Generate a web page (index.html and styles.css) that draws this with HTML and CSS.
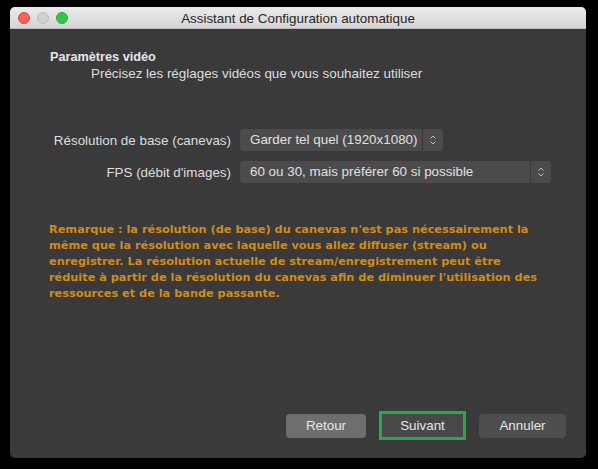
FILE: index.html
```html
<!DOCTYPE html>
<html lang="fr">
<head>
<meta charset="utf-8">
<title>Assistant de Configuration automatique</title>
<link rel="stylesheet" href="styles.css">
</head>
<body>
<div class="window">
  <div class="titlebar">
    <div class="lights">
      <span class="light red"></span>
      <span class="light grey"></span>
      <span class="light green"></span>
    </div>
    <div class="title">Assistant de Configuration automatique</div>
  </div>
  <div class="content">
    <div class="heading">Paramètres vidéo</div>
    <div class="subheading">Précisez les réglages vidéos que vous souhaitez utiliser</div>
    <div class="form">
      <div class="row">
        <div class="label">Résolution de base (canevas)</div>
        <div class="select short">
          <span class="value">Garder tel quel (1920x1080)</span>
          <span class="arrows"><svg width="8" height="12" viewBox="0 0 8 12"><path d="M1.5 4.5 L4 2 L6.5 4.5 M1.5 7.5 L4 10 L6.5 7.5" fill="none" stroke="#bdbdbd" stroke-width="1"/></svg></span>
        </div>
      </div>
      <div class="row">
        <div class="label">FPS (débit d'images)</div>
        <div class="select long">
          <span class="value">60 ou 30, mais préférer 60 si possible</span>
          <span class="arrows"><svg width="8" height="12" viewBox="0 0 8 12"><path d="M1.5 4.5 L4 2 L6.5 4.5 M1.5 7.5 L4 10 L6.5 7.5" fill="none" stroke="#bdbdbd" stroke-width="1"/></svg></span>
        </div>
      </div>
    </div>
    <p class="note">Remarque : la résolution (de base) du canevas n'est pas nécessairement la même que la résolution avec laquelle vous allez diffuser (stream) ou enregistrer. La résolution actuelle de stream/enregistrement peut être réduite à partir de la résolution du canevas afin de diminuer l'utilisation des ressources et de la bande passante.</p>
    <div class="spacer"></div>
    <div class="buttons">
      <button class="btn back">Retour</button>
      <button class="btn next">Suivant</button>
      <button class="btn cancel">Annuler</button>
    </div>
  </div>
</div>
</body>
</html>
```

FILE: styles.css
```css
html, body {
  margin: 0;
  padding: 0;
  background: #000;
  width: 598px;
  height: 469px;
  overflow: hidden;
}
body {
  font-family: "Liberation Sans", Arial, sans-serif;
  font-size: 13.4px;
  color: #dcdcdc;
}
.window {
  margin: 7px 12px 11px 10px;
  width: 576px;
  height: 451px;
  background: #3a3a3a;
  border-radius: 5px;
  overflow: hidden;
  display: flex;
  flex-direction: column;
}
.titlebar {
  height: 21px;
  flex: none;
  background: linear-gradient(#ebebeb, #d5d5d5);
  border-bottom: 1px solid #b8b8b8;
  position: relative;
  display: flex;
  align-items: center;
  justify-content: center;
}
.lights {
  position: absolute;
  left: 8px;
  top: 5px;
  display: flex;
  gap: 7px;
}
.light {
  width: 12px;
  height: 12px;
  border-radius: 50%;
  box-sizing: border-box;
}
.light.red { background: #fc5f57; border: 1px solid #e0443e; }
.light.grey { background: #d0d0d0; border: 1px solid #bdbdbd; }
.light.green { background: #33c748; border: 1px solid #27aa35; }
.title {
  color: #262626;
  font-size: 13.4px;
  padding-top: 1px;
}
.content {
  flex: 1;
  display: flex;
  flex-direction: column;
  padding: 21px 20px 18px 40px;
}
.heading {
  font-weight: bold;
  font-size: 12.7px;
  color: #e6e6e6;
  line-height: 15px;
}
.subheading {
  padding-left: 41px;
  line-height: 17px;
  color: #dedede;
}
.form {
  margin-top: 47px;
  display: flex;
  flex-direction: column;
  gap: 10px;
}
.row {
  display: flex;
  align-items: center;
}
.label {
  width: 181px;
  text-align: right;
  padding-right: 9px;
  color: #dedede;
  white-space: nowrap;
}
.select {
  height: 22px;
  background: #4b4b4b;
  border-radius: 4px;
  display: flex;
  align-items: stretch;
}
.select.short { width: 203px; }
.select.long { width: 311px; }
.value {
  flex: 1;
  padding-left: 10px;
  line-height: 22px;
  color: #e0e0e0;
  white-space: nowrap;
  overflow: hidden;
}
.arrows {
  width: 20px;
  flex: none;
  border-left: 1px solid #383838;
  display: flex;
  align-items: center;
  justify-content: center;
}
.note {
  margin: 39px 0 0 -1px;
  padding-right: 28px;
  color: #d48a16;
  font-family: "DejaVu Sans", Verdana, sans-serif;
  font-weight: bold;
  font-size: 11.3px;
  line-height: 16px;
}
.spacer { flex: 1; }
.buttons {
  display: flex;
  justify-content: flex-end;
  align-items: center;
  gap: 13px;
}
.btn {
  font-family: inherit;
  font-size: 13.4px;
  color: #e6e6e6;
  width: 80px;
  height: 24px;
  border: none;
  border-radius: 4px;
  padding: 0;
}
.btn.back { background: #6e6e6e; }
.btn.next {
  width: 87px;
  height: 29px;
  background: #484848;
  border: 3px solid #1fae48;
  border-radius: 0;
}
.btn.cancel { width: 87px; background: #4e4e4e; }
```
